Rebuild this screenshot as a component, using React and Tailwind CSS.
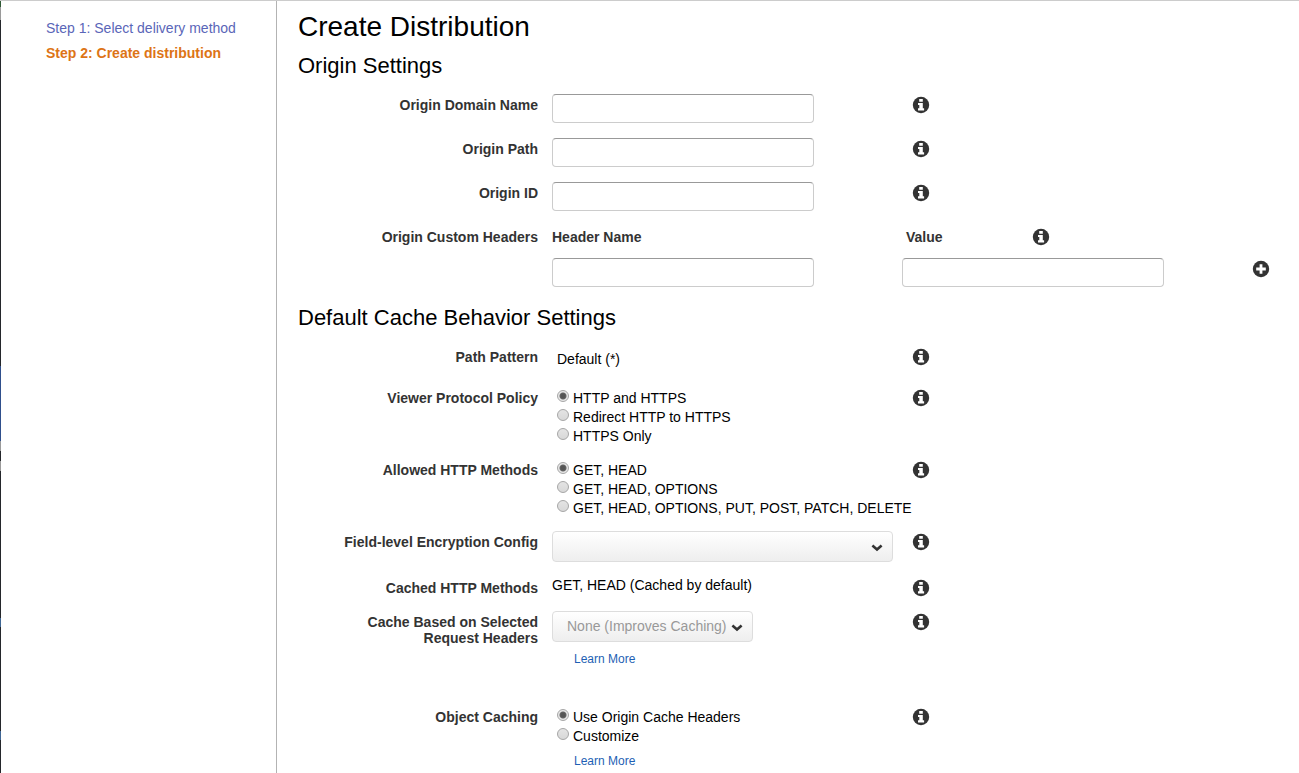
import { useId } from "react";

const EDGE = [
  "h-[6px] bg-[#2f5a35]",
  "h-[13px] bg-[#9a9a9a]",
  "h-[346px] bg-[#24272b]",
  "h-[75px] bg-[#2f4f8c]",
  "h-[10px] bg-[#9a9a9a]",
  "h-[10px] bg-[#24272b]",
  "h-[10px] bg-[#9a9a9a]",
  "h-[147px] bg-[#24272b]",
  "h-[9px] bg-[#3f6694]",
  "h-[104px] bg-[#24272b]",
  "h-[9px] bg-[#3f6694]",
  "grow bg-[#24272b]",
];

function InfoButton({ label }) {
  return (
    <button type="button" aria-label={`About ${label}`} className="block h-4 w-4 text-[#333333]">
      <svg viewBox="0 0 16 16" className="block h-full w-full overflow-visible">
        <circle cx="8" cy="8" r="8.2" fill="currentColor" />
        <path
          d="M6.2 2h3.6v2.8H6.2zM5 5.9h4.8v5.4h1.3v2.3H5v-2.3h1.3V8.1H5z"
          fill="#fff"
        />
      </svg>
    </button>
  );
}

function PlusButton() {
  return (
    <button type="button" aria-label="Add header" className="block h-4 w-4 text-[#333333]">
      <svg viewBox="0 0 16 16" className="block h-full w-full overflow-visible">
        <circle cx="8" cy="8" r="8.2" fill="currentColor" />
        <path d="M6.6 3.2h2.8v3.4h3.4v2.8H9.4v3.4H6.6V9.4H3.2V6.6h3.4z" fill="#fff" />
      </svg>
    </button>
  );
}

function TextBox(props) {
  return (
    <input
      type="text"
      className="block h-[29px] w-[262px] rounded border border-[#cccccc] border-t-[#999999] bg-white px-2 text-sm"
      {...props}
    />
  );
}

const LABEL = "block pt-[3px] pl-10 text-right text-sm leading-4 font-bold text-[#333333]";

function Row({ label, htmlFor, labelId, children }) {
  const Tag = htmlFor ? "label" : "span";
  return (
    <div className="grid grid-cols-[240px_347px_auto] justify-start gap-x-3.5">
      <Tag id={labelId} htmlFor={htmlFor} className={LABEL}>
        {label}
      </Tag>
      <div>{children}</div>
      <div className="pt-[3px]">
        <InfoButton label={label} />
      </div>
    </div>
  );
}

function TextRow({ label }) {
  const id = useId();
  return (
    <Row label={label} htmlFor={id}>
      <TextBox id={id} />
    </Row>
  );
}

function RadioRow({ label, options, children }) {
  const id = useId();
  return (
    <Row label={label} labelId={id}>
      <div role="radiogroup" aria-labelledby={id} className="pl-[5px]">
        {options.map((option, i) => (
          <label key={option} className="flex h-[19px] items-start gap-1 text-sm whitespace-nowrap">
            <input
              type="radio"
              name={id}
              defaultChecked={i === 0}
              className="mt-[3px] h-3 w-3 shrink-0 appearance-none rounded-full border border-[#a6a6a6] bg-linear-to-b from-[#e4e4e4] to-[#d8d8d8] checked:bg-[radial-gradient(circle,#555_0_2px,#666_3px,#e8e8e8_4px)]"
            />
            <span className="leading-[22px]">{option}</span>
          </label>
        ))}
      </div>
      {children}
    </Row>
  );
}

function SelectRow({ label, option, width, children }) {
  const id = useId();
  return (
    <Row label={label} htmlFor={id}>
      <div className={`relative ${width}`}>
        <select
          id={id}
          className="block h-[31px] w-full appearance-none rounded border border-[#dddddd] bg-linear-to-b from-white to-[#eeeeee] pb-0.5 pl-3.5 text-sm text-[#999999]"
        >
          <option>{option}</option>
        </select>
        <svg
          viewBox="0 0 12 8"
          className="pointer-events-none absolute top-[13px] right-2.5 h-2 w-3"
          fill="none"
          stroke="#333333"
          strokeWidth="2.6"
        >
          <path d="M1.4 1.6 6 5.6l4.6-4" />
        </svg>
      </div>
      {children}
    </Row>
  );
}

function LearnMore({ className }) {
  return (
    <a href="#learn-more" className={`block w-fit pl-[22px] text-xs leading-4 text-[#1e5fb4] ${className}`}>
      Learn More
    </a>
  );
}

export default function App() {
  return (
    <div className="flex min-h-screen overflow-x-auto border-t border-[#cccccc] bg-white font-['Liberation_Sans',Arial,sans-serif] text-black">
      <div className="flex w-px shrink-0 flex-col">
        {EDGE.map((part, i) => (
          <span key={i} className={part} />
        ))}
      </div>
      <nav className="w-[276px] shrink-0 border-r border-[#b3b3b3] pt-[15px] pl-[45px] text-sm leading-[25px]">
        <a href="#step-1" className="block text-[#5a66b8]">
          Step 1: Select delivery method
        </a>
        <a href="#step-2" aria-current="step" className="block font-bold text-[#dd7416]">
          Step 2: Create distribution
        </a>
      </nav>
      <main className="min-w-0 grow pt-2 pb-1 pl-[21px]">
        <h1 className="text-[28px] leading-9">Create Distribution</h1>
        <section>
          <h2 className="pt-[7px] text-[22px] leading-7">Origin Settings</h2>
          <div className="flex flex-col gap-[15px] pt-3.5">
            <TextRow label="Origin Domain Name" />
            <TextRow label="Origin Path" />
            <TextRow label="Origin ID" />
            <div className="grid grid-cols-[240px_auto] justify-start gap-x-3.5">
              <span className={LABEL}>Origin Custom Headers</span>
              <div className="grid grid-cols-[350px_351px_auto] gap-y-[13px] text-sm leading-4 font-bold text-[#333333]">
                <label htmlFor="header-name" className="pt-[3px]">
                  Header Name
                </label>
                <div className="flex pt-[3px] pl-1">
                  <label htmlFor="header-value" className="w-[127px]">
                    Value
                  </label>
                  <InfoButton label="Origin Custom Headers" />
                </div>
                <span />
                <TextBox id="header-name" />
                <TextBox id="header-value" />
                <div className="pt-[3px]">
                  <PlusButton />
                </div>
              </div>
            </div>
          </div>
        </section>
        <section>
          <h2 className="pt-[17px] text-[22px] leading-7">Default Cache Behavior Settings</h2>
          <div className="flex flex-col gap-[15px] pt-3.5">
            <Row label="Path Pattern">
              <p className="h-[26px] pt-1 pl-[5px] text-sm leading-[18px]">Default (*)</p>
            </Row>
            <RadioRow
              label="Viewer Protocol Policy"
              options={["HTTP and HTTPS", "Redirect HTTP to HTTPS", "HTTPS Only"]}
            />
            <RadioRow
              label="Allowed HTTP Methods"
              options={["GET, HEAD", "GET, HEAD, OPTIONS", "GET, HEAD, OPTIONS, PUT, POST, PATCH, DELETE"]}
            />
            <SelectRow label="Field-level Encryption Config" option="" width="w-[341px]" />
            <Row label="Cached HTTP Methods">
              <p className="text-sm leading-4">GET, HEAD (Cached by default)</p>
            </Row>
            <SelectRow
              label="Cache Based on Selected Request Headers"
              option="None (Improves Caching)"
              width="w-[201px]"
            >
              <LearnMore className="pt-[9px] pb-6" />
            </SelectRow>
            <RadioRow label="Object Caching" options={["Use Origin Cache Headers", "Customize"]}>
              <LearnMore className="pt-[9px]" />
            </RadioRow>
          </div>
        </section>
      </main>
    </div>
  );
}
